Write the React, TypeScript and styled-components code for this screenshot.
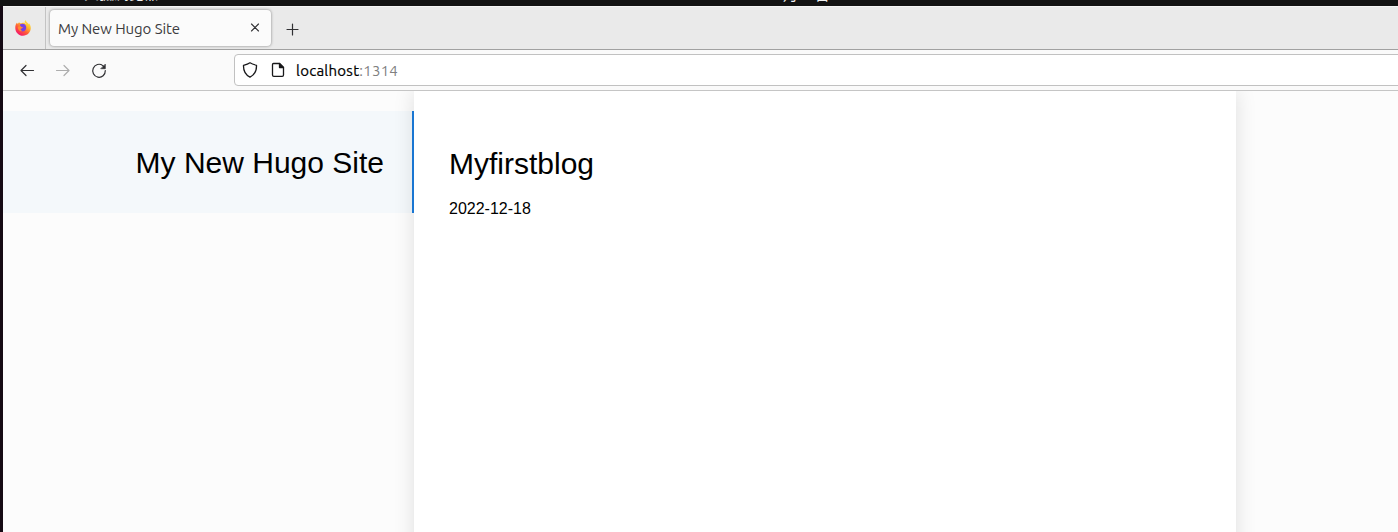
import React from "react";
import styled, { createGlobalStyle } from "styled-components";

const Global = createGlobalStyle`
  *{box-sizing:border-box}
  html,body{margin:0;padding:0;overflow:hidden}
`;
const Desktop = styled.div`
  width:100vw;height:532px;display:flex;flex-direction:column;background:#150a14;overflow:hidden;
`;
const SystemBar = styled.div`
  flex:none;height:6px;background:#131313;overflow:hidden;display:flex;align-items:flex-end;
  color:#f2f2f2;white-space:nowrap;
  font:15px/15px Ubuntu,"Noto Sans CJK SC",sans-serif;
`;
const SystemLabel = styled.span<{ $gap: number; $drop: number }>`
  display:block;height:15px;margin-left:${p => p.$gap}px;margin-bottom:${p => p.$drop}px;
`;
const Browser = styled.div`
  flex:1;min-height:0;margin-left:3px;display:flex;flex-direction:column;background:#fcfcfc;
`;
const TabStrip = styled.div`
  flex:none;height:44px;background:#eaeaea;border-top:1px solid #f6f6f6;border-bottom:1px solid #a1a1a1;
  display:flex;
`;
const PinnedArea = styled.div`
  width:43px;border-right:1px solid #c3c3c3;display:flex;justify-content:center;padding:13px 3px 0 0;
`;
const Tab = styled.div`
  width:221px;height:36px;margin:3px 0 0 4px;border-radius:4px;background:#fbfbfb;
  box-shadow:0 0 3px rgba(0,0,0,.45);
  display:flex;align-items:center;justify-content:space-between;padding:0 11px 0 8px;
`;
const TabTitle = styled.span`
  font:15px/20px Ubuntu,"Noto Sans",sans-serif;color:#3c3c40;letter-spacing:-.08px;white-space:nowrap;
  padding-top:2px;
`;
const NewTab = styled.div`padding:15px 0 0 15px;`;
const Toolbar = styled.div`
  flex:none;height:41px;background:#fafafa;border-bottom:1px solid #c5c5c5;display:flex;
`;
const NavButtons = styled.div`
  width:231px;display:flex;gap:20px;padding:13px 0 0 16px;
`;
const UrlBar = styled.div`
  flex:1;height:32px;margin:4px -6px 0 0;background:#fff;border:1px solid #c1c1c1;border-radius:4px;
  display:flex;align-items:center;padding-left:7px;gap:12px;
`;
const Url = styled.span`
  font:15px/20px Ubuntu,"Noto Sans",sans-serif;color:#000;letter-spacing:.25px;margin-left:-2px;padding-top:2px;
  -webkit-text-stroke:.2px #000;
`;
const Port = styled.span`color:#808080;-webkit-text-stroke:0;`;
const Page = styled.main`
  flex:1;min-height:0;display:flex;font-family:"Liberation Sans",Arial,sans-serif;color:#000;overflow:hidden;
`;
const Sidebar = styled.aside`width:411px;padding-top:20px;`;
const SiteTitle = styled.h1`
  margin:0;height:102px;background:#f4f8fb;text-align:right;display:flex;justify-content:flex-end;
  font-size:30px;line-height:36px;font-weight:400;
`;
const SiteName = styled.span`padding:34px 28px 0 0;`;
const ActiveMark = styled.span`width:2px;background:#1976d2;position:relative;z-index:1;`;
const Content = styled.section`
  width:822px;height:470px;background:#fff;box-shadow:0 0 20px rgba(0,0,0,.12);padding:55px 35px;
`;
const PostTitle = styled.h2`margin:0;font-size:30px;line-height:36px;font-weight:400;`;
const PostDate = styled.time`display:block;margin-top:17px;font-size:16px;line-height:20px;`;

const Icon = ({ size = 16, color = "#303033", width = 1.2, children }: {
  size?: number; color?: string; width?: number; children: React.ReactNode;
}) => (
  <svg width={size} height={size} viewBox={`0 0 ${size} ${size}`} fill="none" stroke={color}
    strokeWidth={width} strokeLinecap="round" strokeLinejoin="round">{children}</svg>
);

const Firefox = () => (
  <svg width="16" height="16" viewBox="0 0 16 16">
    <defs>
      <linearGradient id="flame" x1=".85" y1=".05" x2=".25" y2=".95">
        <stop offset="0" stopColor="#fff04a" /><stop offset=".35" stopColor="#ffb52e" />
        <stop offset=".65" stopColor="#ff5b38" /><stop offset="1" stopColor="#f5156c" />
      </linearGradient>
    </defs>
    <path d="M10.6 0c-.8.8-1 2-1 2.600 1.400.7 1.700 1.700 1.700 1.700C9 2.200 7 2.800 6 3.500 5 3.300 4.500 3 4.200 2.300 3.500 2.800 3.200 3.300 3 3.800c-.5 0-.9-.5-1.100-1C.8 4 .2 6 .3 8.200.4 12.400 3.800 15.800 8 15.800s7.800-3.400 7.800-7.700c0-2-.9-3.900-1.900-4.800l.1 1.200C13.300 2.800 11.200 2.200 10.600 0Z" fill="url(#flame)" />
    <path d="M5 4.500c2-1.300 5.300-.6 6 1.700.8 2.600-.8 5.200-3.300 5.200-2 0-3.500-1.400-3.600-3.100 1.300.6 2.500.2 3.500-.5C6.500 7.600 5.300 7.100 5.700 6c-.7-.2-.9-.7-.7-1.500Z" fill="#7542e5" />
    <path d="M2.800 7.200c.6-1 1.700-1.100 2.900-.9.4.8 1.400.8 2.300.9-.4.9-1.300 1.200-2.200 1.500-.3 1.200.6 2 1.800 2.100-2.500 1.200-4.800-.8-4.800-3.600Z" fill="#ff8a31" />
  </svg>
);

export default function App() {
  return (
    <Desktop>
      <Global />
      <SystemBar>
        <SystemLabel $gap={84} $drop={5}>火狐浏览器</SystemLabel>
        <SystemLabel $gap={607} $drop={4}>12月18日</SystemLabel>
      </SystemBar>
      <Browser>
        <TabStrip>
          <PinnedArea><Firefox /></PinnedArea>
          <Tab>
            <TabTitle>My New Hugo Site</TabTitle>
            <Icon size={10} width={1.100}><path d="M1.500 1l7 7M8.500 1l-7 7" /></Icon>
          </Tab>
          <NewTab><Icon size={13}><path d="M6.500 1v11M1 6.500h11" /></Icon></NewTab>
        </TabStrip>
        <Toolbar>
          <NavButtons>
            <Icon><path d="M14.500 7.500H2M7 2.500l-5 5 5 5" /></Icon>
            <Icon color="#adadad"><path d="M1.500 7.500H14M9 2.500l5 5-5 5" /></Icon>
            <Icon><path d="M14.300 7.500A6.300 6.500 0 1 1 11.800 2.600L13 3.700" /><path d="M14.300 1.500v4.200h-4.200Z" fill="#303033" strokeWidth=".7" /></Icon>
          </NavButtons>
          <UrlBar>
            <Icon color="#18181a" width={1.3}><path d="M8 .8C6.200 2 3.900 2.700 1.500 3.300c-.2 5 1.600 9.500 6.500 11.900 4.900-2.400 6.700-6.900 6.500-11.900C12.100 2.700 9.800 2 8 .8Z" /></Icon>
            <Icon color="#18181a" width={1.3}><path d="M3.500 1.500H9.500l4 4v7.500a1.300 1.300 0 0 1-1.300 1.300H3.800A1.300 1.300 0 0 1 2.500 13V2.500a1 1 0 0 1 1-1Z" /><path d="M9.500 1.500v4h4Z" fill="#18181a" /></Icon>
            <Url>localhost<Port>:1314</Port></Url>
          </UrlBar>
        </Toolbar>
        <Page>
          <Sidebar>
            <SiteTitle><SiteName>My New Hugo Site</SiteName><ActiveMark /></SiteTitle>
          </Sidebar>
          <Content>
            <PostTitle>Myfirstblog</PostTitle>
            <PostDate>2022-12-18</PostDate>
          </Content>
        </Page>
      </Browser>
    </Desktop>
  );
}
